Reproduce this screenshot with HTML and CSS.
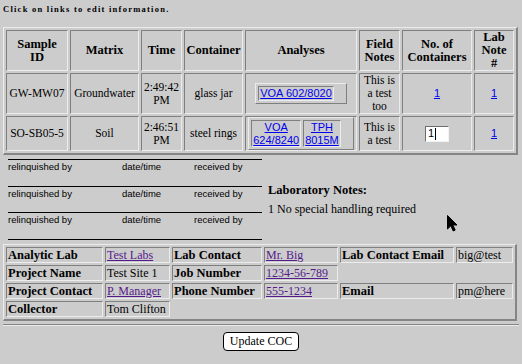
FILE: index.html
```html
<!DOCTYPE html>
<html lang="en">
<head>
    <meta charset="UTF-8">
    <title>Chain of Custody</title>
    <link rel="stylesheet" href="styles.css">
</head>
<body>
    <p class="hint">Click on links to edit information.</p>

    <table class="coc">
        <colgroup>
            <col class="w-id">
            <col class="w-matrix">
            <col class="w-time">
            <col class="w-container">
            <col class="w-analyses">
            <col class="w-notes">
            <col class="w-count">
            <col class="w-labnote">
        </colgroup>
        <tr>
            <th>Sample<br>ID</th>
            <th>Matrix</th>
            <th>Time</th>
            <th>Container</th>
            <th>Analyses</th>
            <th>Field<br>Notes</th>
            <th>No. of<br>Containers</th>
            <th>Lab<br>Note<br>#</th>
        </tr>
        <tr>
            <td>GW-MW07</td>
            <td>Groundwater</td>
            <td>2:49:42<br>PM</td>
            <td>glass jar</td>
            <td class="analyses">
                <table class="picks">
                    <tr>
                        <td><a href="#">VOA 602/8020</a></td>
                        <td class="blank"></td>
                    </tr>
                </table>
            </td>
            <td>This is<br>a test<br>too</td>
            <td><a class="num" href="#">1</a></td>
            <td><a class="num" href="#">1</a></td>
        </tr>
        <tr>
            <td>SO-SB05-5</td>
            <td>Soil</td>
            <td>2:46:51<br>PM</td>
            <td>steel rings</td>
            <td class="analyses">
                <table class="picks">
                    <tr>
                        <td><a href="#">VOA<br>624/8240</a></td>
                        <td><a href="#">TPH<br>8015M</a></td>
                        <td class="blank"></td>
                    </tr>
                </table>
            </td>
            <td>This is<br>a test</td>
            <td><div class="field">1<span class="caret"></span></div></td>
            <td><a class="num" href="#">1</a></td>
        </tr>
    </table>

    <div class="middle">
        <div class="signoffs">
            <div class="sign-row"><span>relinquished by</span><span>date/time</span><span>received by</span></div>
            <div class="sign-row"><span>relinquished by</span><span>date/time</span><span>received by</span></div>
            <div class="sign-row"><span>relinquished by</span><span>date/time</span><span>received by</span></div>
        </div>
        <div class="lab-notes">
            <h3>Laboratory Notes:</h3>
            <p>1 No special handling required</p>
        </div>
    </div>

    <table class="info">
        <colgroup>
            <col class="w-k1">
            <col class="w-v1">
            <col class="w-k2">
            <col class="w-v2">
            <col class="w-k3">
            <col class="w-v3">
        </colgroup>
        <tr>
            <th>Analytic Lab</th>
            <td><a class="seen" href="#">Test Labs</a></td>
            <th>Lab Contact</th>
            <td><a class="seen" href="#">Mr. Big</a></td>
            <th>Lab Contact Email</th>
            <td>big@test</td>
        </tr>
        <tr>
            <th>Project Name</th>
            <td>Test Site 1</td>
            <th>Job Number</th>
            <td><a class="seen" href="#">1234-56-789</a></td>
            <td class="blank"></td>
            <td class="blank"></td>
        </tr>
        <tr>
            <th>Project Contact</th>
            <td><a class="seen" href="#">P. Manager</a></td>
            <th>Phone Number</th>
            <td><a class="seen" href="#">555-1234</a></td>
            <th>Email</th>
            <td>pm@here</td>
        </tr>
        <tr>
            <th>Collector</th>
            <td>Tom Clifton</td>
            <td class="blank"></td>
            <td class="blank"></td>
            <td class="blank"></td>
            <td class="blank"></td>
        </tr>
    </table>

    <hr class="rule">

    <div class="actions">
        <button class="btn" type="button">Update COC</button>
    </div>

    <svg class="pointer" width="11" height="17" viewBox="0 0 11 17">
        <path d="M0.5 0.5 L0.5 14 L3.8 10.8 L6.2 16 L8.2 15.1 L5.9 10 L10 10 Z" fill="#000" stroke="#000" stroke-width="1" stroke-linejoin="miter"/>
    </svg>
</body>
</html>
```

FILE: styles.css
```css
* {
    box-sizing: border-box;
}

body {
    position: relative;
    margin: 3px;
    background: #cccccc;
    color: #000;
    font-family: "Liberation Serif", "DejaVu Serif", serif;
    font-size: 12px;
    line-height: 12px;
}

a {
    color: #0000ee;
}

a.seen {
    color: #551a8b;
}

.hint {
    margin: 0 0 12px;
    font-size: 8.5px;
    font-weight: bold;
    letter-spacing: 1.25px;
}

/* samples table */
.coc {
    width: 515px;
    table-layout: fixed;
    border-collapse: separate;
    border-spacing: 2px;
    border-style: solid;
    border-width: 1px 2px 2px 1px;
    border-color: #ececec #858585 #858585 #ececec;
}

.w-id { width: 62px; }
.w-matrix { width: 69px; }
.w-time { width: 41px; }
.w-container { width: 59px; }
.w-analyses { width: 112px; }
.w-notes { width: 41px; }
.w-count { width: 70px; }
.w-labnote { width: 40px; }

.coc th,
.coc td {
    padding: 0;
    text-align: center;
    vertical-align: middle;
    border: 1px solid;
    border-color: #7f7f7f #ececec #ececec #7f7f7f;
    font-size: 11.5px;
    line-height: 13px;
}

.coc th {
    font-size: 12.5px;
}

.coc td.analyses {
    padding: 0;
}

.num,
.picks a {
    font-family: "Liberation Sans", Arial, sans-serif;
    font-size: 11px;
}

.picks {
    margin: 0 auto;
    border-collapse: separate;
    border-spacing: 2px;
    border: 1px solid;
    border-color: #ececec #7f7f7f #7f7f7f #ececec;
}

.coc .picks td {
    padding: 0 1px;
    line-height: 12.5px;
    border-color: #7f7f7f #ececec #ececec #7f7f7f;
}

.coc .picks td.blank,
.info td.blank {
    width: 8px;
    border: none;
}

.field {
    display: inline-flex;
    align-items: center;
    width: 24px;
    height: 16px;
    padding-left: 2px;
    background: #fff;
    border-style: solid;
    border-width: 1px;
    border-color: #6e6e6e #f4f4f4 #f4f4f4 #6e6e6e;
    font-family: "Liberation Sans", Arial, sans-serif;
    font-size: 11px;
    text-align: left;
}

.caret {
    display: inline-block;
    width: 1px;
    height: 12px;
    margin-left: 1px;
    background: #000;
}

/* signatures + lab notes */
.middle {
    display: flex;
    align-items: center;
    gap: 6px;
    margin: 4px 0 4px;
    padding-left: 5px;
}

.signoffs {
    width: 254px;
    border-bottom: 1px solid #000;
}

.sign-row {
    display: grid;
    grid-template-columns: 114px 72px auto;
    height: 26.5px;
    padding-top: 1px;
    border-top: 1px solid #000;
    font-family: "Liberation Sans", Arial, sans-serif;
    font-size: 9.5px;
    line-height: 11px;
}

.lab-notes h3 {
    margin: 0 0 5px;
    font-size: 12.5px;
    line-height: 14px;
}

.lab-notes p {
    margin: 0;
    line-height: 14px;
}

/* project info */
.info {
    width: 514px;
    table-layout: fixed;
    border-collapse: separate;
    border-spacing: 2px;
    border-style: solid;
    border-width: 1px 2px 2px 1px;
    border-color: #ececec #858585 #858585 #ececec;
}

.w-k1 { width: 97px; }
.w-v1 { width: 65px; }
.w-k2 { width: 90px; }
.w-v2 { width: 74px; }
.w-k3 { width: 114px; }
.w-v3 { width: 57px; }

.info th,
.info td {
    height: 16px;
    padding: 0 1px;
    text-align: left;
    vertical-align: middle;
    white-space: nowrap;
    overflow: hidden;
    border: 1px solid;
    border-color: #7f7f7f #ececec #ececec #7f7f7f;
    line-height: 14px;
}

.info th {
    font-size: 12.5px;
}

.rule {
    margin: 3px 0 6px;
    border: none;
    border-top: 1px solid #858585;
    border-bottom: 1px solid #ececec;
}

.actions {
    text-align: center;
}

.btn {
    height: 19px;
    padding: 0 6px;
    background: #fff;
    color: #000;
    border: 1px solid #000;
    border-radius: 4px;
    font-family: "Liberation Serif", serif;
    font-size: 12px;
}

.pointer {
    position: absolute;
    left: 444px;
    top: 212px;
}
```
